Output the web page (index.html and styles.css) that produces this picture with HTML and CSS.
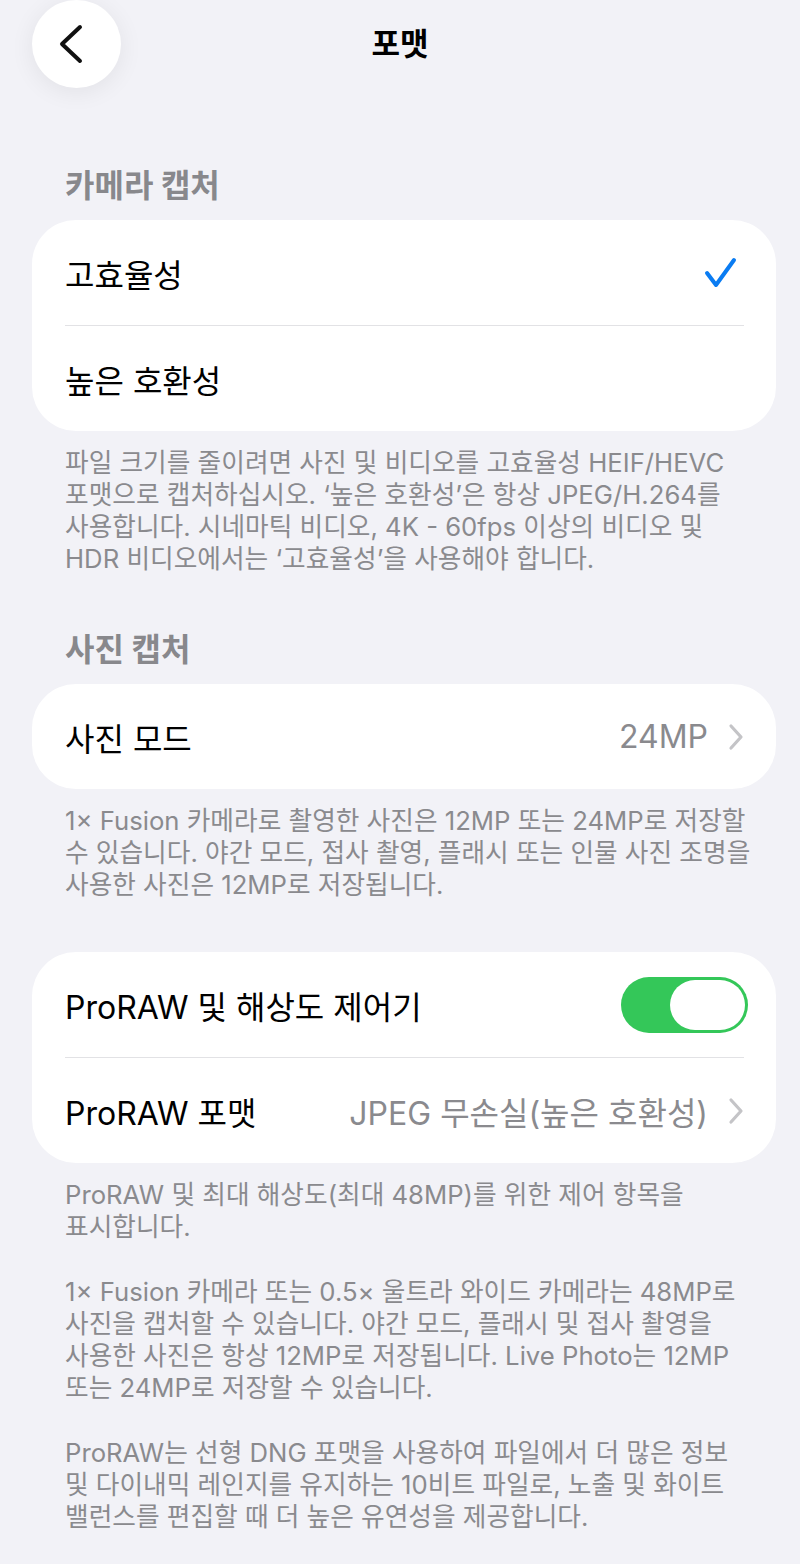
FILE: index.html
```html
<!DOCTYPE html>
<html lang="ko">
<head>
    <meta charset="UTF-8">
    <meta name="viewport" content="width=device-width, initial-scale=1.0">
    <title>포맷</title>
    <link rel="stylesheet" href="styles.css">
</head>
<body>
    <div class="page">
        <header class="nav">
            <button class="back" aria-label="뒤로">
                <svg width="30" height="44" viewBox="0 0 30 44">
                    <path d="M21 5 L3 22 L21 39" fill="none" stroke="#111" stroke-width="4" stroke-linecap="round" stroke-linejoin="round"/>
                </svg>
            </button>
            <h1 class="title">포맷</h1>
            <span></span>
        </header>

        <section class="group first">
            <h2 class="group-title">카메라 캡처</h2>
            <div class="card">
                <div class="row">
                    <span class="label">고효율성</span>
                    <svg class="check" width="40" height="40" viewBox="0 0 40 40">
                        <path d="M3 20 L12 32 L30 7" fill="none" stroke="#0a7cf2" stroke-width="4" stroke-linecap="round" stroke-linejoin="round"/>
                    </svg>
                </div>
                <div class="row">
                    <span class="label">높은 호환성</span>
                </div>
            </div>
            <p class="note">파일 크기를 줄이려면 사진 및 비디오를 고효율성 HEIF/HEVC<br>포맷으로 캡처하십시오. ‘높은 호환성’은 항상 JPEG/H.264를<br>사용합니다. 시네마틱 비디오, 4K - 60fps 이상의 비디오 및<br>HDR 비디오에서는 ‘고효율성’을 사용해야 합니다.</p>
        </section>

        <section class="group">
            <h2 class="group-title">사진 캡처</h2>
            <div class="card">
                <div class="row">
                    <span class="label">사진 모드</span>
                    <span class="value">24MP</span>
                    <svg class="chevron" width="16" height="28" viewBox="0 0 16 28">
                        <path d="M3 3 L13 14 L3 25" fill="none" stroke="#c4c4c7" stroke-width="3.2" stroke-linecap="round" stroke-linejoin="round"/>
                    </svg>
                </div>
            </div>
            <p class="note">1× Fusion 카메라로 촬영한 사진은 12MP 또는 24MP로 저장할<br>수 있습니다. 야간 모드, 접사 촬영, 플래시 또는 인물 사진 조명을<br>사용한 사진은 12MP로 저장됩니다.</p>
        </section>

        <section class="group plain">
            <div class="card">
                <div class="row">
                    <span class="label">ProRAW 및 해상도 제어기</span>
                    <span class="toggle on"><span class="knob"></span></span>
                </div>
                <div class="row">
                    <span class="label">ProRAW 포맷</span>
                    <span class="value">JPEG 무손실(높은 호환성)</span>
                    <svg class="chevron" width="16" height="28" viewBox="0 0 16 28">
                        <path d="M3 3 L13 14 L3 25" fill="none" stroke="#c4c4c7" stroke-width="3.2" stroke-linecap="round" stroke-linejoin="round"/>
                    </svg>
                </div>
            </div>
            <p class="note">ProRAW 및 최대 해상도(최대 48MP)를 위한 제어 항목을<br>표시합니다.</p>
            <p class="note more">1× Fusion 카메라 또는 0.5× 울트라 와이드 카메라는 48MP로<br>사진을 캡처할 수 있습니다. 야간 모드, 플래시 및 접사 촬영을<br>사용한 사진은 항상 12MP로 저장됩니다. Live Photo는 12MP<br>또는 24MP로 저장할 수 있습니다.</p>
            <p class="note more">ProRAW는 선형 DNG 포맷을 사용하여 파일에서 더 많은 정보<br>및 다이내믹 레인지를 유지하는 10비트 파일로, 노출 및 화이트<br>밸런스를 편집할 때 더 높은 유연성을 제공합니다.</p>
        </section>
    </div>
</body>
</html>
```

FILE: styles.css
```css
body {
    margin: 0;
    background-color: #f2f2f7;
    font-family: Inter, "Noto Sans CJK KR", sans-serif;
    color: #000;
}
.page {
    padding: 0 24px 30px 32px;
}
.nav {
    display: grid;
    grid-template-columns: 88px 1fr 88px;
    align-items: center;
    height: 88px;
    margin-right: 8px;
}
.back {
    width: 89px;
    height: 88px;
    border: none;
    border-radius: 50%;
    background-color: #fff;
    box-shadow: 0 4px 24px rgba(0, 0, 0, 0.07);
    display: flex;
    align-items: center;
    justify-content: center;
    padding: 0 6px 0 0;
}
.title {
    margin: 0;
    text-align: center;
    font-size: 31px;
    font-weight: 700;
    line-height: 40px;
}
.group.first {
    margin-top: 78px;
}
.group {
    margin-top: 55px;
}
.group.plain {
    margin-top: 51px;
}
.group-title {
    margin: 0 0 14px 33px;
    font-size: 32px;
    font-weight: 700;
    line-height: 40px;
    color: #88888c;
}
.card {
    background-color: #fff;
    border-radius: 44px;
}
.row {
    display: flex;
    align-items: center;
    height: 105px;
    margin: 0 32px 0 33px;
}
.row + .row {
    border-top: 1px solid #e2e2e5;
}
.label {
    flex: 1;
    font-size: 32px;
}
.value {
    font-size: 32px;
    color: #8a8a8e;
    margin-right: 20px;
}
.toggle {
    position: relative;
    width: 127px;
    height: 56px;
    border-radius: 28px;
    background-color: #34c759;
    margin-right: -4px;
}
.toggle .knob {
    position: absolute;
    top: 3px;
    right: 3px;
    width: 75px;
    height: 50px;
    border-radius: 25px;
    background-color: #fff;
}
.note {
    margin: 0;
    padding: 16px 0 0 33px;
    font-size: 25.7px;
    line-height: 32px;
    color: #8a8a8e;
    white-space: nowrap;
}
.note.more {
    padding-top: 33px;
}
```
